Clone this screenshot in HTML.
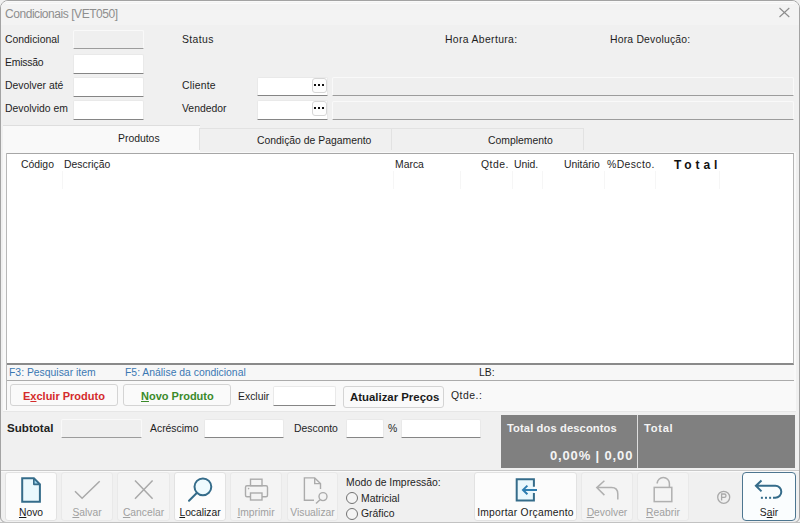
<!DOCTYPE html>
<html><head><meta charset="utf-8">
<style>
*{box-sizing:border-box;margin:0;padding:0}
html,body{width:800px;height:523px;overflow:hidden;background:#f0f0f0}
body{position:relative;font-family:"Liberation Sans",sans-serif;font-size:10px;color:#1a1a1a}
.a{position:absolute;white-space:nowrap;line-height:1}
.win{position:absolute;left:0;top:0;width:800px;height:523px;border:1px solid #a3a3a3;border-radius:8px 8px 6px 6px;background:#f0f0f0}
.title{position:absolute;left:1px;top:1px;width:798px;height:24px;background:#f3f3f3;border-radius:7px 7px 0 0;border-top:1px solid #f9f9f9}
.box{position:absolute;background:#fff;border:1px solid #e9e9e9;border-bottom:1px solid #858585;border-radius:2px 2px 0 0}
.gbox{position:absolute;background:#efefef;border:1px solid #f9f9f9;border-bottom:1px solid #9c9c9c;border-radius:2px 2px 0 0}
.lbl{position:absolute;white-space:nowrap;line-height:1;font-size:10.4px;color:#1e1e1e}
.dots{position:absolute;width:15px;height:15px;background:#fdfdfd;border:1px solid #d6d6d6;border-radius:3px}
.dots i{position:absolute;top:5px;width:2px;height:2px;background:#111}
.btn{position:absolute;background:#fafafa;border:1px solid #d4d4d4;border-radius:3px}
.tb{position:absolute;top:472px;height:49px;background:#f4f4f4;border:1px solid #e9e9e9;border-radius:3px}
.tb.on{background:#fcfcfc;border-color:#e2e2e2}
.tl{position:absolute;top:508px;text-align:center;font-size:10.3px;line-height:1;white-space:nowrap}
.radio{position:absolute;width:12px;height:12px;border:1px solid #727272;border-radius:50%;background:#f4f4f4}
.b{font-weight:bold}
</style></head>
<body>
<div class="win"></div>
<div class="title"></div>
<div class="a" style="left:6px;top:3px;width:788px;height:1px;background:#fafafa"></div>
<div class="a" style="left:5px;top:8px;font-size:12px;letter-spacing:-0.45px;color:#8e8e8e">Condicionais [VET050]</div>
<svg class="a" style="left:778px;top:7px" width="13" height="12" viewBox="778 7 13 12"><path d="M779.5 8L789.3 17M789.3 8L779.5 17" stroke="#8c8c8c" stroke-width="1.1"/></svg>

<!-- header -->
<div class="lbl" style="left:5px;top:35px">Condicional</div>
<div class="gbox" style="left:73px;top:30px;width:71px;height:19px"></div>
<div class="lbl" style="left:5px;top:58px;letter-spacing:-0.2px">Emissão</div>
<div class="box" style="left:73px;top:54px;width:71px;height:20px"></div>
<div class="lbl" style="left:5px;top:81px">Devolver até</div>
<div class="box" style="left:73px;top:77px;width:71px;height:20px"></div>
<div class="lbl" style="left:5px;top:104px">Devolvido em</div>
<div class="box" style="left:73px;top:100px;width:71px;height:20px"></div>

<div class="lbl" style="left:182px;top:35px;letter-spacing:0.4px">Status</div>
<div class="lbl" style="left:445px;top:35px;letter-spacing:0.35px">Hora Abertura:</div>
<div class="lbl" style="left:610px;top:35px;letter-spacing:0.2px">Hora Devolução:</div>

<div class="lbl" style="left:182px;top:81px;letter-spacing:0.2px">Cliente</div>
<div class="box" style="left:257px;top:77px;width:71px;height:19px"></div>
<div class="dots" style="left:312px;top:78px"><i style="left:1px"></i><i style="left:5px"></i><i style="left:9px"></i></div>
<div class="gbox" style="left:332px;top:77px;width:462px;height:19px"></div>
<div class="lbl" style="left:182px;top:104px">Vendedor</div>
<div class="box" style="left:257px;top:100px;width:71px;height:20px"></div>
<div class="dots" style="left:312px;top:101px"><i style="left:1px"></i><i style="left:5px"></i><i style="left:9px"></i></div>
<div class="gbox" style="left:332px;top:101px;width:462px;height:19px"></div>

<!-- tab sheet -->
<div class="a" style="left:3px;top:152px;width:793px;height:260px;background:#f9f9f9"></div>
<div class="a" style="left:3px;top:125px;width:197px;height:28px;background:#f9f9f9;border-top:1px solid #dedede"></div>
<div class="a" style="left:199px;top:128px;width:193px;height:22px;background:#f0f0f0;border:1px solid #e2e2e2;border-bottom:none"></div>
<div class="a" style="left:391px;top:128px;width:193px;height:22px;background:#f0f0f0;border:1px solid #e2e2e2;border-bottom:none"></div>
<div class="lbl" style="left:118px;top:134px">Produtos</div>
<div class="lbl" style="left:257px;top:136px">Condição de Pagamento</div>
<div class="lbl" style="left:488px;top:136px">Complemento</div>

<!-- grid -->
<div class="a" style="left:6px;top:153px;width:788px;height:212px;background:#fff;border:1px solid #b6b6b6;border-top-color:#a6a6a6;border-bottom:2px solid #8a8a8a"></div>
<div class="a" style="left:62px;top:171px;width:1px;height:18px;background:#f6f6f6"></div>
<div class="a" style="left:393px;top:171px;width:1px;height:18px;background:#f6f6f6"></div>
<div class="a" style="left:460px;top:171px;width:1px;height:18px;background:#f6f6f6"></div>
<div class="a" style="left:512px;top:171px;width:1px;height:18px;background:#f6f6f6"></div>
<div class="a" style="left:542px;top:171px;width:1px;height:18px;background:#f6f6f6"></div>
<div class="a" style="left:604px;top:171px;width:1px;height:18px;background:#f6f6f6"></div>
<div class="a" style="left:655px;top:171px;width:1px;height:18px;background:#f6f6f6"></div>
<div class="a" style="left:719px;top:171px;width:1px;height:18px;background:#f6f6f6"></div>
<div class="lbl" style="left:21px;top:160px">Código</div>
<div class="lbl" style="left:64px;top:160px">Descrição</div>
<div class="lbl" style="left:395px;top:160px">Marca</div>
<div class="lbl" style="left:481px;top:160px;letter-spacing:0.5px">Qtde.</div>
<div class="lbl" style="left:514px;top:160px">Unid.</div>
<div class="lbl" style="left:564px;top:160px">Unitário</div>
<div class="lbl" style="left:607px;top:160px;letter-spacing:0.4px">%Descto.</div>
<div class="lbl b" style="left:674px;top:159px;font-size:12px;letter-spacing:3.9px;color:#111">Total</div>

<!-- status row -->
<div class="a" style="left:6px;top:365px;width:788px;height:15px;background:#f7f7f7"></div>
<div class="a" style="left:6px;top:380px;width:788px;height:1px;background:#ababab"></div>
<div class="a" style="left:6px;top:153px;width:1px;height:257px;background:#b8b8b8"></div>
<div class="lbl" style="left:9px;top:368px;color:#3b78b3">F3: Pesquisar item</div>
<div class="lbl" style="left:125px;top:368px;color:#3b78b3">F5: Análise da condicional</div>
<div class="lbl" style="left:479px;top:368px">LB:</div>

<!-- buttons row -->
<div class="btn" style="left:10px;top:384px;width:108px;height:22px"></div>
<div class="lbl b" style="left:23px;top:391px;color:#d42b2b;font-size:11px">E<u>x</u>cluir Produto</div>
<div class="btn" style="left:123px;top:384px;width:108px;height:22px"></div>
<div class="lbl b" style="left:141px;top:391px;color:#3a8a2a;font-size:11px"><u>N</u>ovo Produto</div>
<div class="lbl" style="left:238px;top:392px">Excluir</div>
<div class="box" style="left:273px;top:386px;width:63px;height:20px"></div>
<div class="btn" style="left:343px;top:386px;width:101px;height:22px"></div>
<div class="lbl b" style="left:350px;top:392px;font-size:11.4px;color:#1a1a1a">Atualizar Preços</div>
<div class="lbl" style="left:451px;top:391px;letter-spacing:0.5px">Qtde.:</div>
<div class="a" style="left:3px;top:411px;width:793px;height:1px;background:#e6e6e6"></div>

<!-- subtotal row -->
<div class="lbl b" style="left:7px;top:422px;font-size:11.6px;color:#222">Subtotal</div>
<div class="gbox" style="left:61px;top:419px;width:81px;height:19px"></div>
<div class="lbl" style="left:150px;top:424px">Acréscimo</div>
<div class="box" style="left:204px;top:419px;width:80px;height:19px"></div>
<div class="lbl" style="left:294px;top:424px">Desconto</div>
<div class="box" style="left:346px;top:419px;width:38px;height:19px"></div>
<div class="lbl" style="left:388px;top:424px">%</div>
<div class="box" style="left:401px;top:419px;width:80px;height:19px"></div>

<div class="a" style="left:501px;top:415px;width:294px;height:53px;background:#808080"></div>
<div class="a" style="left:637px;top:415px;width:1px;height:53px;background:#dedede"></div>
<div class="lbl b" style="left:507px;top:423px;color:#f4f4f4;font-size:11.2px;letter-spacing:0.1px">Total dos descontos</div>
<div class="lbl b" style="left:550px;top:449px;color:#f4f4f4;font-size:13px;letter-spacing:0.85px">0,00% | 0,00</div>
<div class="lbl b" style="left:644px;top:423px;color:#f4f4f4;font-size:11.2px;letter-spacing:0.7px">Total</div>

<!-- toolbar -->
<div class="a" style="left:1px;top:470px;width:798px;height:1px;background:#c9c9c9"></div>
<div class="a" style="left:1px;top:471px;width:798px;height:1px;background:#fafafa"></div>
<div class="tb on" style="left:5px;width:52px"></div>
<div class="tb" style="left:61px;width:52px"></div>
<div class="tb" style="left:117px;width:53px"></div>
<div class="tb on" style="left:174px;width:52px"></div>
<div class="tb" style="left:230px;width:52px"></div>
<div class="tb" style="left:287px;width:51px"></div>
<div class="tb on" style="left:474px;width:103px"></div>
<div class="tb" style="left:581px;width:52px"></div>
<div class="tb" style="left:637px;width:52px"></div>
<div class="a" style="left:742px;top:472px;width:54px;height:49px;background:#fafdfe;border:1px solid #4d7690;border-radius:4px"></div>
<svg class="a" style="left:0;top:470px" width="800" height="53" viewBox="0 470 800 53">
 <g fill="none" stroke-linejoin="miter">
  <!-- Novo -->
  <path d="M22.2 478.2H33.8L39.9 484.4V501.7H22.2Z" fill="#eaf8fd" stroke="#356c8a" stroke-width="2"/>
  <path d="M33.8 478.2V484.4H39.9Z" fill="#9fd6ee" stroke="#356c8a" stroke-width="1.6" stroke-linejoin="bevel"/>
  <!-- Salvar -->
  <path d="M75 491.3L82.1 498.2L99.7 481.3" stroke="#a9a9a9" stroke-width="1.5"/>
  <!-- Cancelar -->
  <path d="M135 480.6L152.6 498.8M152.6 480.6L135 498.8" stroke="#a9a9a9" stroke-width="1.5"/>
  <!-- Localizar -->
  <circle cx="202.9" cy="486.8" r="8.4" fill="#eefafe" stroke="#356c8a" stroke-width="2"/>
  <path d="M196.5 493.3L189 500.8" stroke="#356c8a" stroke-width="2" stroke-linecap="round"/>
  <!-- Imprimir -->
  <rect x="250.5" y="479.2" width="11.5" height="6.5" stroke="#ababab" stroke-width="1.4"/>
  <rect x="245.5" y="485.7" width="22" height="11" rx="1.5" stroke="#ababab" stroke-width="1.4"/>
  <rect x="250.5" y="493" width="11.5" height="7" fill="#f3f3f3" stroke="#ababab" stroke-width="1.4"/>
  <circle cx="248.6" cy="488.6" r="0.8" fill="#ababab"/>
  <!-- Visualizar -->
  <path d="M320.5 489V483.6L314.7 477.9H304.4V500.3H314" stroke="#ababab" stroke-width="1.4"/>
  <path d="M314.7 477.9V483.6H320.5" stroke="#ababab" stroke-width="1.4"/>
  <circle cx="323" cy="496.6" r="4" stroke="#ababab" stroke-width="1.4"/>
  <path d="M320 499.8L316 503.6" stroke="#ababab" stroke-width="1.4"/>
  <!-- Importar -->
  <path d="M533.9 486.8V479.2H516.7V500.6H533.9V493" fill="#eaf8fd" stroke="#356c8a" stroke-width="2"/>
  <path d="M537 489.9H523M527.4 485.6L523 489.9L527.4 494.2" stroke="#2e7db0" stroke-width="2"/>
  <!-- Devolver -->
  <path d="M604.4 480.8L596.8 487.6L604.4 495.1M596.8 487.6H611.5Q617.8 487.6 617.8 494V499.5" stroke="#b0b0b0" stroke-width="1.5"/>
  <!-- Reabrir -->
  <rect x="654.2" y="487.4" width="17.6" height="14.2" stroke="#b0b0b0" stroke-width="1.5"/>
  <path d="M669.4 487.4V483.6A6.1 6.1 0 0 0 657.2 483.6V482.2" stroke="#b0b0b0" stroke-width="1.5"/>
  <!-- P -->
  <circle cx="723.7" cy="497.3" r="6" stroke="#a9a9a9" stroke-width="1.3"/>
  <path d="M721.6 500.6V494H724.3A1.7 1.7 0 0 1 724.3 497.4H721.6" stroke="#a9a9a9" stroke-width="1.3"/>
  <!-- Sair -->
  <path d="M761.5 480.6L755.9 485.8L761.5 491.4M755.9 485.8H775.3A6 6 0 0 1 775.3 497.8H773" stroke="#356c8a" stroke-width="2"/>
  <rect x="760.9" y="496.8" width="2" height="2" fill="#356c8a"/>
  <rect x="765" y="496.8" width="2" height="2" fill="#356c8a"/>
  <rect x="769.1" y="496.8" width="2" height="2" fill="#356c8a"/>
 </g>
</svg>
<div class="tl" style="left:5px;width:52px;color:#1a1a1a"><u>N</u>ovo</div>
<div class="tl" style="left:61px;width:52px;color:#a0a0a0"><u>S</u>alvar</div>
<div class="tl" style="left:117px;width:53px;color:#a0a0a0"><u>C</u>ancelar</div>
<div class="tl" style="left:174px;width:52px;color:#1a1a1a"><u>L</u>ocalizar</div>
<div class="tl" style="left:230px;width:52px;color:#a0a0a0"><u>I</u>mprimir</div>
<div class="tl" style="left:287px;width:51px;color:#a0a0a0">Visualizar</div>
<div class="tl" style="left:474px;width:103px;color:#1a1a1a;letter-spacing:0.25px">Importar Orçamento</div>
<div class="tl" style="left:581px;width:52px;color:#a0a0a0"><u>D</u>evolver</div>
<div class="tl" style="left:637px;width:52px;color:#a0a0a0"><u>R</u>eabrir</div>
<div class="tl" style="left:742px;width:54px;color:#1a1a1a">S<u>a</u>ir</div>
<div class="lbl" style="left:346px;top:478px">Modo de Impressão:</div>
<div class="radio" style="left:346px;top:492px"></div>
<div class="lbl" style="left:361px;top:494px">Matricial</div>
<div class="radio" style="left:346px;top:508px"></div>
<div class="lbl" style="left:361px;top:509px">Gráfico</div>
<div class="a" style="left:0;top:522px;width:800px;height:1px;background:#c2c2c2"></div>
</body></html>
